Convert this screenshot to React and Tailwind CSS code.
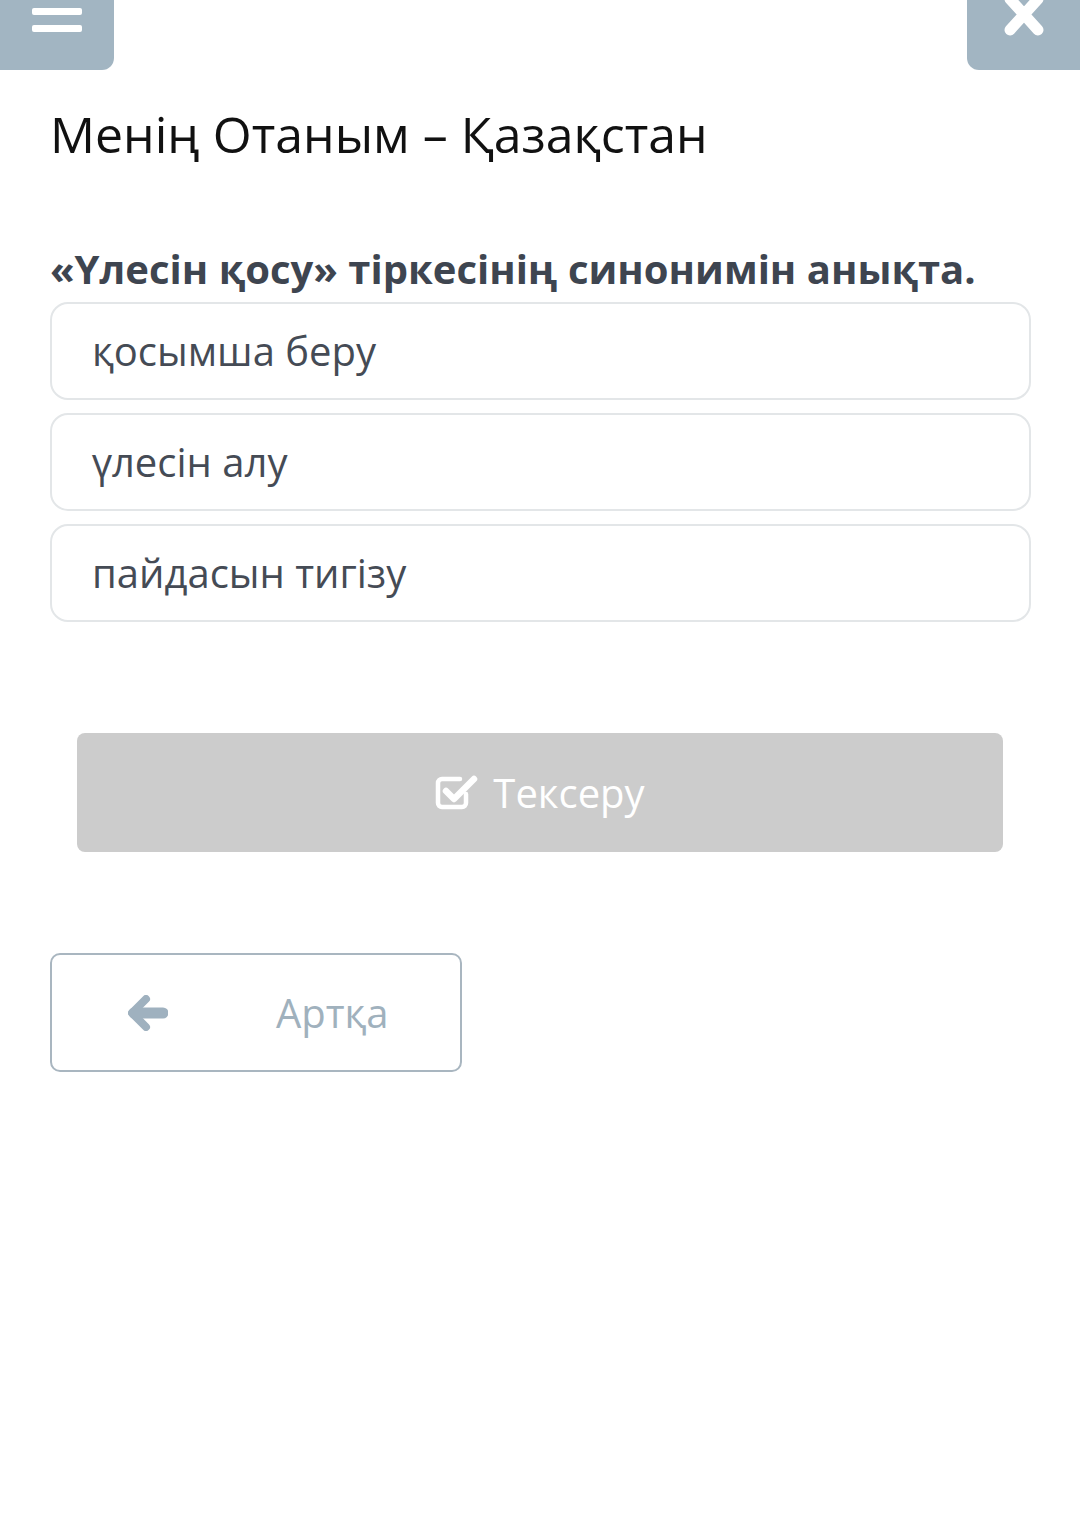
import React from 'react'

const options = ['қосымша беру', 'үлесін алу', 'пайдасын тигізу']

function CheckSquareIcon() {
  return (
    <svg width="44" height="38" viewBox="0 0 44 38" fill="none">
      <path d="M31 20v9a4 4 0 0 1-4 4H7a4 4 0 0 1-4-4V9a4 4 0 0 1 4-4h18" stroke="white" strokeWidth="4.5" strokeLinecap="round" strokeLinejoin="round" />
      <path d="M11 17l8 8L39 5" stroke="white" strokeWidth="6.5" strokeLinecap="round" strokeLinejoin="round" />
    </svg>
  )
}

function ArrowLeftIcon() {
  return (
    <svg width="40" height="36" viewBox="0 0 40 36" fill="none">
      <path d="M18 4L4 18l14 14" stroke="#9fb1bf" strokeWidth="8" strokeLinecap="round" strokeLinejoin="round" />
      <path d="M6 18h29" stroke="#9fb1bf" strokeWidth="11" strokeLinecap="round" />
    </svg>
  )
}

export default function App() {
  return (
    <div className="min-h-[1534px] w-[1080px] bg-white" style={{ fontFamily: '"Open Sans", "Noto Sans", sans-serif' }}>
      {/* Top bar */}
      <div className="flex justify-between h-[70px]">
        <div className="w-[114px] h-[70px] bg-[#a2b5c2] rounded-br-[12px] flex flex-col items-center gap-[10px] pt-[8px]">
          <div className="w-[50px] h-[7px] bg-white rounded-[2px]" />
          <div className="w-[50px] h-[7px] bg-white rounded-[2px]" />
        </div>
        <div className="w-[113px] h-[70px] bg-[#a2b5c2] rounded-bl-[12px] flex justify-center">
          <svg width="44" height="38" viewBox="0 0 44 38">
            <path d="M8 -1L36 30M36 -1L8 30" stroke="white" strokeWidth="11" strokeLinecap="round" />
          </svg>
        </div>
      </div>

      <div className="pl-[50px] pr-[49px]">
        <h1 className="text-[50px] leading-[64px] text-[#111] mt-[32px]">Менің Отаным – Қазақстан</h1>

        <p className="text-[40px] leading-[48px] font-bold text-[#3e4550] mt-[79px]">
          «Үлесін қосу» тіркесінің синонимін анықта.
        </p>

        <div className="flex flex-col gap-[13px] mt-[9px]">
          {options.map(o => (
            <div key={o} className="h-[98px] border-2 border-[#e3e6e8] rounded-[18px] flex items-center pl-[40px] text-[40px] text-[#454b55]">
              {o}
            </div>
          ))}
        </div>

        <div className="pl-[27px] pr-[28px] mt-[111px]">
          <div className="h-[119px] bg-[#cccccc] rounded-[8px] flex items-center justify-center gap-[14px]">
            <CheckSquareIcon />
            <span className="text-[40px] text-white">Тексеру</span>
          </div>
        </div>

        <div className="mt-[101px] w-[412px] h-[119px] border-2 border-[#a9b6c0] rounded-[10px] flex items-center">
          <div className="w-[224px] flex justify-center pr-[32px]">
            <ArrowLeftIcon />
          </div>
          <span className="text-[40px] text-[#a0b1bd]">Артқа</span>
        </div>
      </div>
    </div>
  )
}
